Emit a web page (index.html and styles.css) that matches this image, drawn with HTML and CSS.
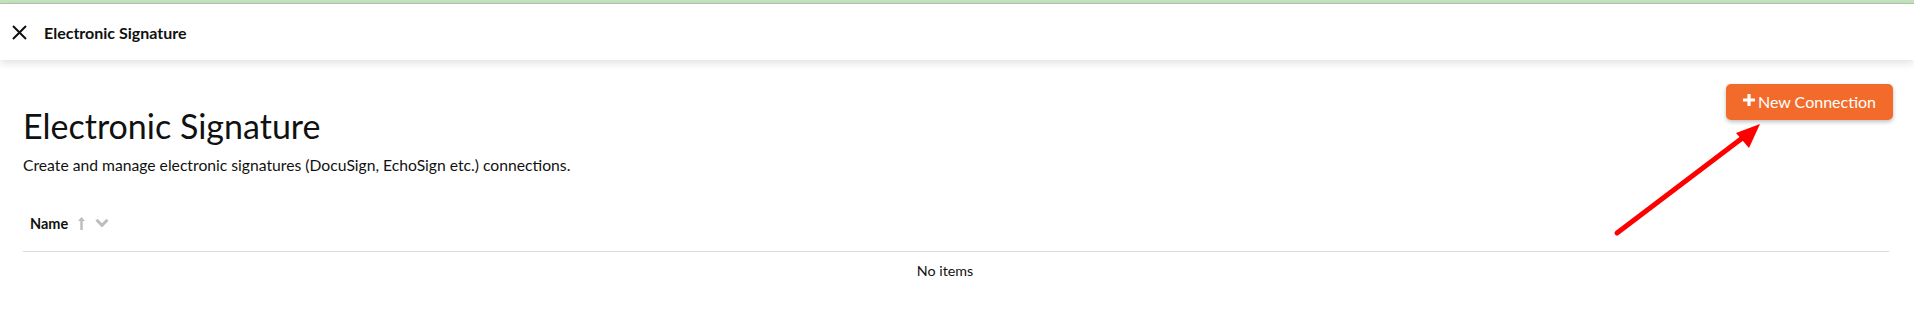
FILE: index.html
```html
<!DOCTYPE html>
<html>
<head>
<meta charset="utf-8">
<link rel="stylesheet" href="styles.css">
</head>
<body>
<div class="topbar"></div>
<header class="header">
  <svg class="close" width="15" height="15" viewBox="0 0 15 15"><path d="M1 1L14 14M14 1L1 14" stroke="#111" stroke-width="2" fill="none"/></svg>
  <span class="header-title">Electronic Signature</span>
</header>
<main class="main">
  <div class="title-row">
    <div class="title-block">
      <h1 class="page-title">Electronic Signature</h1>
      <p class="desc">Create and manage electronic signatures (DocuSign, EchoSign etc.) connections.</p>
    </div>
    <button class="btn-new"><svg class="plus" width="12" height="12" viewBox="0 0 12 12"><path d="M4.4 0h3.2v4.4H12v3.2H7.6V12H4.4V7.6H0V4.4h4.4z" fill="#fff"/></svg>New Connection</button>
  </div>
  <div class="table">
    <div class="thead">
      <span class="th-name">Name</span>
      <svg class="sort-up" width="9" height="15" viewBox="0 0 9 15"><path d="M4.5 1L1 5h2.3v9h2.4V5H8z" fill="#bdbdbd"/></svg>
      <svg class="chev" width="14" height="10" viewBox="0 0 14 10"><path d="M1.5 1.8L7 7.3L12.5 1.8" stroke="#bdbdbd" stroke-width="3" fill="none"/></svg>
    </div>
    <div class="empty">No items</div>
  </div>
</main>
<svg class="annot" width="1914" height="326" viewBox="0 0 1914 326">
  <line x1="1617" y1="233" x2="1745" y2="136" stroke="#ff0000" stroke-width="5" stroke-linecap="round"/>
  <polygon points="1760,124 1736,133 1749,148" fill="#ff0000"/>
</svg>
</body>
</html>
```
FILE: styles.css
```css
html, body {
  margin: 0;
  padding: 0;
  background: #fff;
  font-family: Lato, "Open Sans", sans-serif;
  color: #111;
}
.topbar {
  height: 3px;
  background: #c6e1c0;
  border-bottom: 1px solid #a9cba2;
}
.header {
  height: 56px;
  display: flex;
  align-items: center;
  padding-left: 12px;
  gap: 17px;
  background: #fff;
  box-shadow: 0 3px 8px rgba(0,0,0,0.12);
  position: relative;
}
.close {
  margin-top: 1px;
}
.header-title {
  font-weight: 700;
  font-size: 16px;
}
.main {
  padding: 24px 21px 0 23px;
}
.title-row {
  display: flex;
  justify-content: space-between;
  align-items: flex-start;
}
.page-title {
  margin: 22px 0 0 0;
  font-size: 34px;
  font-weight: 400;
  line-height: 40px;
  color: #111;
}
.desc {
  margin: 9px 0 0 0;
  font-size: 15.7px;
  line-height: 20px;
}
.btn-new {
  margin-top: 0;
  height: 36px;
  width: 167px;
  border: none;
  border-radius: 5px;
  background: #f36b2b;
  color: #fff;
  font-family: Lato, sans-serif;
  font-size: 16px;
  display: flex;
  align-items: center;
  justify-content: center;
  gap: 3px;
  box-shadow: 0 2px 4px rgba(0,0,0,0.25);
  padding: 0 0 2px 0;
}
.plus {
  margin-bottom: 2px;
}
.table {
  margin-right: 4px;
  margin-top: 35px;
}
.thead {
  display: flex;
  align-items: center;
  height: 18px;
  padding: 4px 0 19px 7px;
  border-bottom: 1px solid #dcdcdc;
}
.th-name {
  font-weight: 700;
  font-size: 14.5px;
  margin-right: 9px;
}
.sort-up {
  margin-right: 9px;
}
.empty {
  text-align: center;
  font-size: 14.3px;
  line-height: 17px;
  padding-top: 10px;
  margin-right: 22px;
}
.annot {
  position: absolute;
  left: 0;
  top: 0;
  pointer-events: none;
}
```
